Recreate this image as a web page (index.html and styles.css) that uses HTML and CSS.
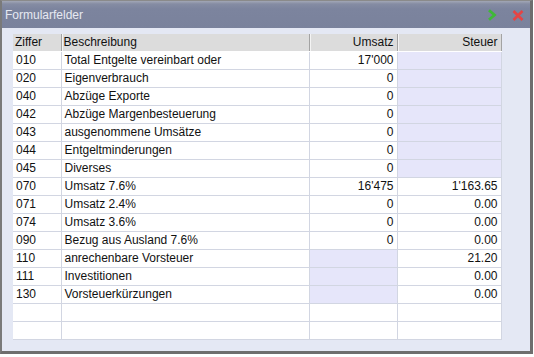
FILE: index.html
```html
<!DOCTYPE html>
<html>
<head>
<meta charset="utf-8">
<link rel="stylesheet" href="styles.css">
</head>
<body>
<div class="window">
  <div class="titlebar">
    <span class="title">Formularfelder</span>
    <div class="tools">
      <svg class="icon" width="10" height="12" viewBox="0 0 10 12"><path d="M2 1.2 L7.5 6 L2 10.8" fill="none" stroke="#3fb937" stroke-width="2.8"/></svg>
      <svg class="icon" width="12" height="11" viewBox="0 0 12 11"><path d="M1.5 1 L10.5 10 M10.5 1 L1.5 10" fill="none" stroke="#e54444" stroke-width="2.6"/></svg>
    </div>
  </div>
  <div class="panel">
    <table class="grid">
      <colgroup><col class="c1"><col class="c2"><col class="c3"><col class="c4"></colgroup>
      <thead>
        <tr><th>Ziffer</th><th>Beschreibung</th><th class="r">Umsatz</th><th class="r">Steuer</th></tr>
      </thead>
      <tbody>
        <tr><td>010</td><td>Total Entgelte vereinbart oder</td><td class="r">17'000</td><td class="sh"></td></tr>
        <tr><td>020</td><td>Eigenverbrauch</td><td class="r">0</td><td class="sh"></td></tr>
        <tr><td>040</td><td>Abzüge Exporte</td><td class="r">0</td><td class="sh"></td></tr>
        <tr><td>042</td><td>Abzüge Margenbesteuerung</td><td class="r">0</td><td class="sh"></td></tr>
        <tr><td>043</td><td>ausgenommene Umsätze</td><td class="r">0</td><td class="sh"></td></tr>
        <tr><td>044</td><td>Entgeltminderungen</td><td class="r">0</td><td class="sh"></td></tr>
        <tr><td>045</td><td>Diverses</td><td class="r">0</td><td class="sh"></td></tr>
        <tr><td>070</td><td>Umsatz 7.6%</td><td class="r">16'475</td><td class="r">1'163.65</td></tr>
        <tr><td>071</td><td>Umsatz 2.4%</td><td class="r">0</td><td class="r">0.00</td></tr>
        <tr><td>074</td><td>Umsatz 3.6%</td><td class="r">0</td><td class="r">0.00</td></tr>
        <tr><td>090</td><td>Bezug aus Ausland 7.6%</td><td class="r">0</td><td class="r">0.00</td></tr>
        <tr><td>110</td><td>anrechenbare Vorsteuer</td><td class="sh"></td><td class="r">21.20</td></tr>
        <tr><td>111</td><td>Investitionen</td><td class="sh"></td><td class="r">0.00</td></tr>
        <tr><td>130</td><td>Vorsteuerkürzungen</td><td class="sh"></td><td class="r">0.00</td></tr>
        <tr><td></td><td></td><td></td><td></td></tr>
        <tr><td></td><td></td><td></td><td></td></tr>
      </tbody>
    </table>
  </div>
</div>
</body>
</html>
```
FILE: styles.css
```css
html, body {
  margin: 0;
  padding: 0;
  background: #ffffff;
}
body {
  font-family: "Liberation Sans", Arial, sans-serif;
  font-size: 12px;
  color: #111;
}
.window {
  width: 528px;
  height: 350px;
  border: 1px solid #8a8a8a;
  border-left: 2px solid #7a7a7a;
  border-right: 3px solid #6e6e6e;
  border-bottom: 3px solid #6e6e6e;
  display: flex;
  flex-direction: column;
  background: #e4e8f4;
}
.titlebar {
  height: 27px;
  flex: none;
  display: flex;
  align-items: center;
  justify-content: space-between;
  background: linear-gradient(#a2a7b6 0px, #858ca3 3px, #7c849e 8px, #7a829c 100%);
  padding: 0 6px 0 3px;
}
.title {
  color: #e6e9f2;
  font-size: 12px;
}
.tools {
  display: flex;
  align-items: center;
  gap: 15px;
  padding-top: 1px;
}
.icon { display: block; }
.panel {
  flex: 1;
  padding: 6px 0 0 11px;
}
.grid {
  border-collapse: collapse;
  table-layout: fixed;
  width: 488px;
  background: #fff;
}
.c1 { width: 48px; }
.c2 { width: 248px; }
.c3 { width: 88px; }
.c4 { width: 104px; }
.grid th {
  height: 17px;
  padding: 0 2px;
  font-weight: normal;
  text-align: left;
  background: #dcdcdc;
  color: #111;
  border-right: 1px solid #a3a3a3;
  border-bottom: 1px solid #ffffff;
  box-shadow: inset 1px 0 0 #f4f4f4;
  line-height: 17px;
}
.grid th:first-child { box-shadow: none; }
.grid td {
  height: 17px;
  padding: 0 2px 0 3px;
  line-height: 17px;
  border-right: 1px solid #d2d6e2;
  border-bottom: 1px solid #d2d6e2;
  white-space: nowrap;
  overflow: hidden;
}
.grid td:first-child { padding-left: 3px; }
.grid .r { text-align: right; padding-right: 3px; }
.grid .sh { background: #e6e6fa; }
```
